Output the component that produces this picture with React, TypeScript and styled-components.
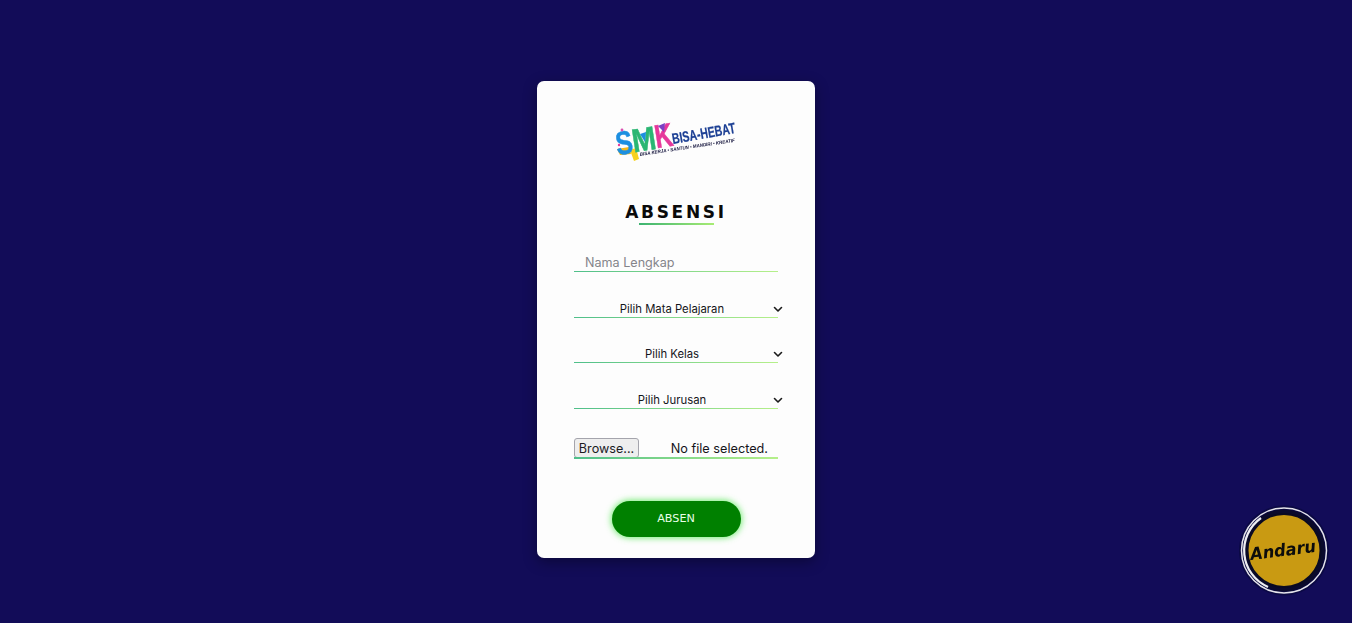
import React from "react";
import styled, { createGlobalStyle } from "styled-components";

const Global = createGlobalStyle`
  html, body { margin: 0; padding: 0; height: 100%; background: #120c58; overflow: hidden; }
  #root { height: 100%; }
`;

const Page = styled.main`
  min-height: 623px;
  box-sizing: border-box;
  padding-top: 81px;
  display: flex;
  flex-direction: column;
  align-items: center;
  font-family: Inter, "Liberation Sans", sans-serif;
`;

const Card = styled.form`
  width: 278px;
  height: 477px;
  box-sizing: border-box;
  background: #fdfdfd;
  border-radius: 7px;
  box-shadow: 0 4px 14px rgba(0, 0, 0, 0.35);
  padding: 40px 37px 0;
  display: flex;
  flex-direction: column;
  align-items: stretch;
`;

const LogoWrap = styled.div`
  height: 44px;
  display: flex;
  justify-content: center;
  svg { display: block; margin-left: 1px; }
`;

const Heading = styled.h1`
  margin: 37px 0 0;
  height: 25px;
  font: 700 17px/20px "DejaVu Sans", sans-serif;
  letter-spacing: 2.7px;
  text-align: center;
  color: #0a0a0a;
  position: relative;
  &::after {
    content: "";
    position: absolute;
    left: 65px;
    top: 21px;
    width: 75px;
    height: 2px;
    background: linear-gradient(90deg, #3cb371, #a8ec74);
  }
`;

const Field = styled.div<{ $top: number; $h: number; $line?: number }>`
  margin-top: ${(p) => p.$top}px;
  height: ${(p) => p.$h}px;
  position: relative;
  display: flex;
  align-items: center;
  &::after {
    content: "";
    position: absolute;
    left: 0;
    right: 0;
    bottom: 0;
    height: ${(p) => p.$line ?? 1}px;
    background: linear-gradient(90deg, #4fbf8a, #b6f08a);
  }
`;

const TextInput = styled.input`
  width: 100%;
  box-sizing: border-box;
  border: 0;
  outline: 0;
  background: transparent;
  padding: 1px 11px 0;
  font: 400 12.6px/18px Inter, sans-serif;
  color: #222;
  &::placeholder { color: #85858b; opacity: 1; }
`;

const SelectBox = styled.div`
  width: 100%;
  display: flex;
  align-items: center;
  font-size: 11.3px;
  line-height: 16px;
  color: #15151a;
  position: relative;
  padding-right: 8px;
  box-sizing: border-box;
  justify-content: center;
  span { display: block; }
  svg { position: absolute; right: -5px; top: 50%; margin-top: -5px; }
`;

const FileRow = styled.div`
  width: 100%;
  display: flex;
  align-items: center;
  justify-content: space-between;
  font: 400 12.7px/18px Inter, sans-serif;
  color: #15151a;
  padding-right: 10px;
  box-sizing: border-box;
`;

const BrowseButton = styled.button`
  width: 65px;
  height: 20px;
  box-sizing: border-box;
  padding: 1px 0 0;
  border: 1px solid #a4a4ac;
  border-radius: 3px;
  background: #eeeeee;
  font: 400 12.6px/18px Inter, sans-serif;
  color: #1b1b1f;
  margin-bottom: 1px;
`;

const SubmitButton = styled.button`
  align-self: center;
  margin-top: 42px;
  width: 129px;
  height: 36px;
  border: 0;
  border-radius: 18px;
  background: #008000;
  color: #e8ffe8;
  font: 400 11.2px/16px "DejaVu Sans", sans-serif;
  box-shadow: 0 0 6px 1px rgba(60, 230, 60, 0.7);
`;

const Badge = styled.div`
  position: fixed;
  left: 1238px;
  top: 505px;
  width: 92px;
  height: 92px;
  svg { display: block; }
`;

const LogoSvg = styled.svg`
  overflow: visible;
`;

const Chevron = () => (
  <svg width="10" height="10" viewBox="0 0 10 10" fill="none" stroke="#1a1a1a" strokeWidth="1.6" strokeLinecap="round" strokeLinejoin="round">
    <path d="M1.5 3.5 5 7l3.5-3.5" />
  </svg>
);

const Logo = () => (
  <LogoSvg width="122" height="42" viewBox="0 0 122 42">
    <defs>
      <filter id="soft" x="-10%" y="-20%" width="120%" height="140%">
        <feGaussianBlur stdDeviation="0.3" />
      </filter>
    </defs>
    <g filter="url(#soft)" fontFamily="'Liberation Sans', sans-serif" fontWeight="700">
      <path d="M14 29 18 40 23 38 20 27z" fill="#f7d21c" />
      <path d="M1 28 13 26 15 33 4 34z" fill="#f5b918" />
      <text x="0" y="33" fontSize="33" fill="#1f8fe0" stroke="#1f8fe0" strokeWidth="0.5" transform="rotate(-9 8 24)" textLength="17" lengthAdjust="spacingAndGlyphs">S</text>
      <text x="16" y="30" fontSize="33" fill="#2bb673" stroke="#2bb673" strokeWidth="0.5" transform="rotate(-9 27 20)" textLength="24" lengthAdjust="spacingAndGlyphs">M</text>
      <text x="39" y="26" fontSize="33" fill="#e6399b" stroke="#e6399b" strokeWidth="0.5" transform="rotate(-9 48 17)" textLength="18" lengthAdjust="spacingAndGlyphs">K</text>
      <path d="M42 5 49 2 48 11z" fill="#7b3fc4" />
      <path d="M24 13 30 11 29 21z" fill="#1f8fe0" />
      <circle cx="6" cy="9" r="1.4" fill="#d94fb0" />
      <circle cx="3" cy="24" r="1.2" fill="#e6399b" />
      <text x="57" y="23" fontSize="15" fill="#1c3f94" stroke="#1c3f94" strokeWidth="0.25" transform="rotate(-10 57 23)" textLength="64" lengthAdjust="spacingAndGlyphs">BISA-HEBAT</text>
      <text x="24" y="35" fontSize="4.8" fill="#16163c" fontStyle="italic" transform="rotate(-8.5 24 35)" textLength="96" lengthAdjust="spacingAndGlyphs">BISA KERJA • SANTUN • MANDIRI • KREATIF</text>
    </g>
  </LogoSvg>
);

const BadgeArt = () => (
  <svg width="92" height="92" viewBox="0 0 92 92">
    <circle cx="46" cy="45.5" r="45" fill="#0b0944" />
    <circle cx="46" cy="45.5" r="42.5" fill="none" stroke="#e4e4ea" strokeWidth="1.5" />
    <circle cx="46" cy="45.5" r="41" fill="#0a0a2c" />
    <path d="M23 13 A39.8 39.8 0 0 0 30 82" fill="none" stroke="#eeeef2" strokeWidth="2.2" />
    <circle cx="46" cy="45.5" r="36.5" fill="#c99a12" stroke="#0a0a22" strokeWidth="2" />
    <text x="45" y="51" textAnchor="middle" fontFamily="'DejaVu Sans', sans-serif" fontStyle="italic" fontWeight="700" fontSize="17" fill="#0c0c0c" transform="rotate(-7 45 45)" textLength="66" lengthAdjust="spacingAndGlyphs">Andaru</text>
  </svg>
);

export default function App() {
  return (
    <>
      <Global />
      <Page>
        <Card onSubmit={(e) => e.preventDefault()}>
          <LogoWrap><Logo /></LogoWrap>
          <Heading>ABSENSI</Heading>
          <Field $top={25} $h={20}>
            <TextInput placeholder="Nama Lengkap" />
          </Field>
          <Field $top={28} $h={18}>
            <SelectBox><span>Pilih Mata Pelajaran</span><Chevron /></SelectBox>
          </Field>
          <Field $top={27} $h={18}>
            <SelectBox><span>Pilih Kelas</span><Chevron /></SelectBox>
          </Field>
          <Field $top={28} $h={18}>
            <SelectBox><span>Pilih Jurusan</span><Chevron /></SelectBox>
          </Field>
          <Field $top={29} $h={21} $line={2}>
            <FileRow>
              <BrowseButton type="button">Browse...</BrowseButton>
              <span>No file selected.</span>
            </FileRow>
          </Field>
          <SubmitButton type="submit">ABSEN</SubmitButton>
        </Card>
        <Badge><BadgeArt /></Badge>
      </Page>
    </>
  );
}
